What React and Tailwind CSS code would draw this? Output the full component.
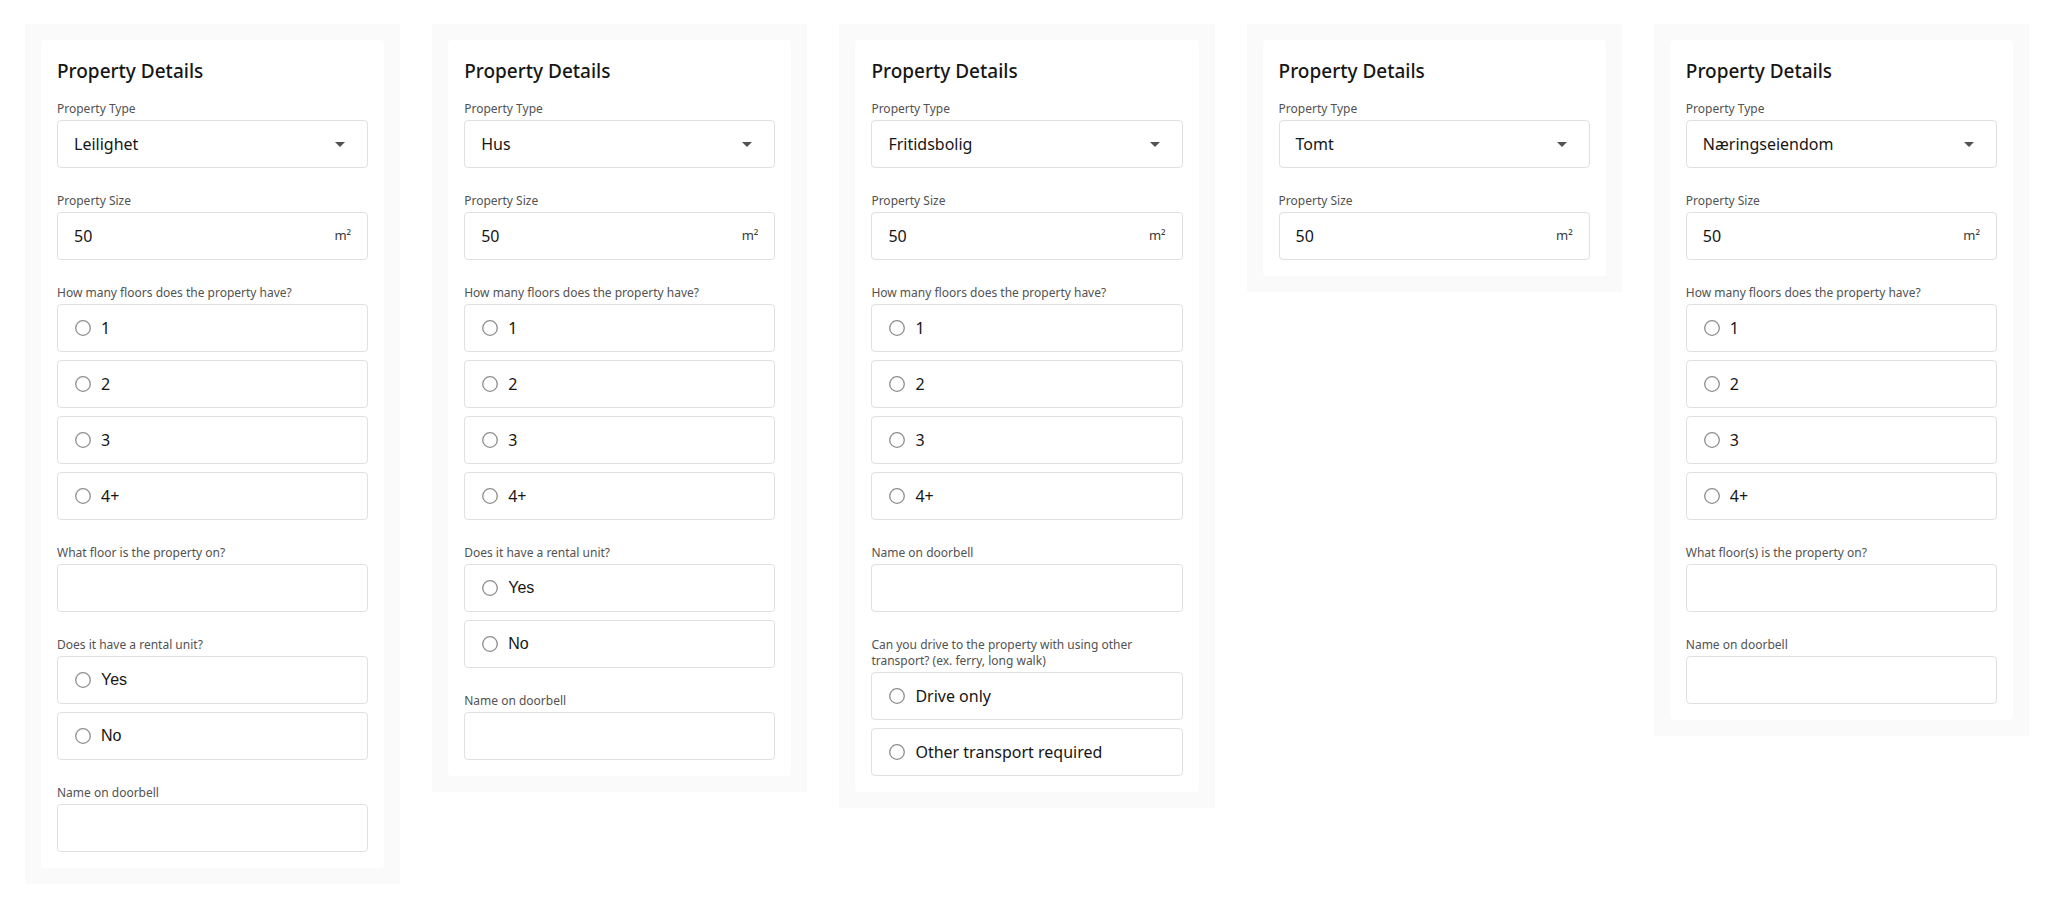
import React from "react";

const FONT = { fontFamily: '"Noto Sans", "Open Sans", sans-serif' };
const ARIAL = { fontFamily: '"Liberation Sans", Arial, sans-serif' };

function Label({ children }) {
  return (
    <div className="mb-[3px] pt-px text-[12px] leading-4 text-[#525252]">
      {children}
    </div>
  );
}

function SelectBox({ value }) {
  return (
    <div className="flex h-12 items-center justify-between rounded border border-[#e0e0e0] bg-white pl-4 pr-[22px]">
      <span className="text-[16px] text-[#161616]">{value}</span>
      <svg width="10" height="5" viewBox="0 0 10 5" className="block">
        <path d="M0 0 L10 0 L5 5 Z" fill="#525252" />
      </svg>
    </div>
  );
}

function SizeInput() {
  return (
    <div className="flex h-12 items-center justify-between rounded border border-[#e0e0e0] bg-white px-4">
      <span className="text-[16px] text-[#161616]">50</span>
      <span className="text-[13px] text-[#393939]">m²</span>
    </div>
  );
}

function TextBox() {
  return <div className="h-12 rounded border border-[#e0e0e0] bg-white" />;
}

function Radio({ label, arial }) {
  return (
    <div className="flex h-12 items-center rounded border border-[#e0e0e0] bg-white pl-[17px]">
      <svg width="16" height="16" viewBox="0 0 16 16" className="block shrink-0">
        <circle cx="8" cy="8" r="7.3" fill="none" stroke="#8d8d8d" strokeWidth="1.3" />
      </svg>
      <span
        className="ml-[10px] text-[16px] text-[#161616]"
        style={arial ? ARIAL : undefined}
      >
        {label}
      </span>
    </div>
  );
}

function RadioGroup({ label, options, arial }) {
  return (
    <div>
      <Label>{label}</Label>
      <div className="flex flex-col gap-2">
        {options.map((o) => (
          <Radio key={o} label={o} arial={arial} />
        ))}
      </div>
    </div>
  );
}

function Field({ label, children }) {
  return (
    <div>
      <Label>{label}</Label>
      {children}
    </div>
  );
}

const FLOORS = ["1", "2", "3", "4+"];

function Card({ type, children }) {
  return (
    <div className="bg-[#fafafa] p-4">
      <div className="rounded bg-white p-4">
        <h2 className="mb-[15px] pt-px text-[19px] font-medium leading-7 text-[#161616]">
          Property Details
        </h2>
        <div className="flex flex-col gap-6">
          <Field label="Property Type">
            <SelectBox value={type} />
          </Field>
          <Field label="Property Size">
            <SizeInput />
          </Field>
          {children}
        </div>
      </div>
    </div>
  );
}

export default function App() {
  return (
    <div className="min-h-screen bg-white" style={FONT}>
      <div className="grid grid-cols-5 items-start gap-8 pb-6 pl-[25px] pr-[23px] pt-6">
        <Card type="Leilighet">
          <RadioGroup label="How many floors does the property have?" options={FLOORS} />
          <Field label="What floor is the property on?">
            <TextBox />
          </Field>
          <RadioGroup label="Does it have a rental unit?" options={["Yes", "No"]} arial />
          <Field label="Name on doorbell">
            <TextBox />
          </Field>
        </Card>
        <Card type="Hus">
          <RadioGroup label="How many floors does the property have?" options={FLOORS} />
          <RadioGroup label="Does it have a rental unit?" options={["Yes", "No"]} arial />
          <Field label="Name on doorbell">
            <TextBox />
          </Field>
        </Card>
        <Card type="Fritidsbolig">
          <RadioGroup label="How many floors does the property have?" options={FLOORS} />
          <Field label="Name on doorbell">
            <TextBox />
          </Field>
          <RadioGroup
            label={
              <>
                Can you drive to the property with using other
                <br />
                transport? (ex. ferry, long walk)
              </>
            }
            options={["Drive only", "Other transport required"]}
          />
        </Card>
        <Card type="Tomt" />
        <Card type="Næringseiendom">
          <RadioGroup label="How many floors does the property have?" options={FLOORS} />
          <Field label="What floor(s) is the property on?">
            <TextBox />
          </Field>
          <Field label="Name on doorbell">
            <TextBox />
          </Field>
        </Card>
      </div>
    </div>
  );
}
